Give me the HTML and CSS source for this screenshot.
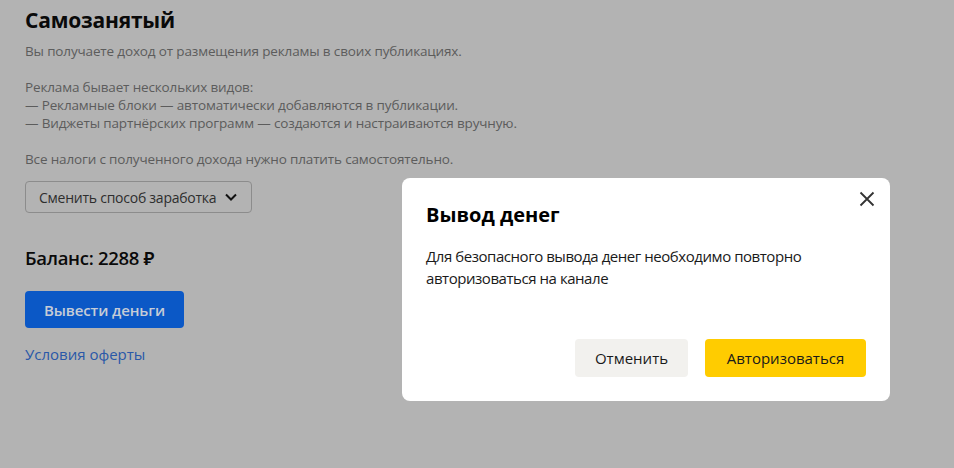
FILE: index.html
```html
<!DOCTYPE html>
<html lang="ru">
<head>
<meta charset="utf-8">
<link rel="stylesheet" href="styles.css">
</head>
<body>
<main class="page">
  <h1 class="title">Самозанятый</h1>
  <p class="desc">Вы получаете доход от размещения рекламы в своих публикациях.<br><br>Реклама бывает нескольких видов:<br>— Рекламные блоки — автоматически добавляются в публикации.<br>— Виджеты партнёрских программ — создаются и настраиваются вручную.<br><br>Все налоги с полученного дохода нужно платить самостоятельно.</p>
  <button class="select">Сменить способ заработка
    <svg class="chev" width="14" height="10" viewBox="0 0 14 10"><path d="M2 2.5l5 5 5-5" fill="none" stroke="#111" stroke-width="2"/></svg>
  </button>
  <div class="balance">Баланс: 2288 ₽</div>
  <button class="primary">Вывести деньги</button>
  <a class="link">Условия оферты</a>
</main>
<div class="modal">
  <button class="close" aria-label="Закрыть">
    <svg width="16" height="16" viewBox="0 0 16 16"><path d="M1.5 1.5l13 13M14.5 1.5l-13 13" stroke="#333" stroke-width="1.8" fill="none"/></svg>
  </button>
  <h2 class="m-title">Вывод денег</h2>
  <p class="m-text">Для безопасного вывода денег необходимо повторно авторизоваться на канале</p>
  <div class="m-actions">
    <button class="btn-cancel">Отменить</button>
    <button class="btn-auth">Авторизоваться</button>
  </div>
</div>
</body>
</html>
```
FILE: styles.css
```css
* { box-sizing: border-box; }
html, body { margin: 0; height: 100%; }
body {
  background: #b3b3b3;
  font-family: "Open Sans", "Noto Sans", sans-serif;
  position: relative;
  overflow: hidden;
}
.page {
  padding: 7px 25px 0;
  display: flex;
  flex-direction: column;
  align-items: flex-start;
}
.title {
  margin: 0;
  font-size: 21px;
  line-height: 26px;
  font-weight: 700;
  color: #0a0a0a;
  letter-spacing: -0.2px;
}
.desc {
  margin: 9px 0 0;
  font-size: 13.5px;
  line-height: 18px;
  color: #5c5c5c;
  letter-spacing: -0.15px;
}
.select {
  margin-top: 13px;
  height: 32px;
  padding: 0 13px 0 13px;
  border: 1px solid #8c8c8c;
  border-radius: 4px;
  background: transparent;
  font-family: inherit;
  font-size: 14px;
  color: #2e2e2e;
  letter-spacing: -0.25px;
  display: flex;
  align-items: center;
  gap: 8px;
}
.balance {
  margin-top: 33px;
  font-size: 18.5px;
  line-height: 24px;
  font-weight: 600;
  color: #0a0a0a;
  letter-spacing: -0.3px;
}
.primary {
  margin-top: 21px;
  width: 159px;
  height: 37px;
  border: 0;
  border-radius: 4px;
  background: #0b58c6;
  color: #c6ccd6;
  font-family: inherit;
  font-size: 15px;
  font-weight: 600;
  letter-spacing: -0.1px;
}
.link {
  margin-top: 16px;
  font-size: 15px;
  line-height: 20px;
  color: #2a58a8;
  letter-spacing: 0;
}
.modal {
  position: absolute;
  left: 402px;
  top: 178px;
  width: 488px;
  height: 223px;
  background: #fff;
  border-radius: 8px;
  padding: 24px 24px 24px 24px;
  display: flex;
  flex-direction: column;
}
.close {
  position: absolute;
  right: 11px;
  top: 9px;
  width: 24px;
  height: 24px;
  border: 0;
  background: none;
  padding: 4px;
  display: flex;
}
.m-title {
  margin: 0;
  font-size: 20px;
  line-height: 26px;
  font-weight: 700;
  color: #000;
  letter-spacing: 0;
}
.m-text {
  margin: 17px 0 0;
  font-size: 15px;
  line-height: 22px;
  color: #1a1a1a;
  letter-spacing: -0.45px;
  max-width: 420px;
}
.m-actions {
  margin-top: auto;
  display: flex;
  justify-content: flex-end;
  gap: 17px;
}
.m-actions button {
  height: 38px;
  border: 0;
  border-radius: 4px;
  font-family: inherit;
  font-size: 15px;
  color: #1a1a1a;
  letter-spacing: 0;
}
.btn-cancel {
  width: 113px;
  background: #f2f1ee;
}
.btn-auth {
  width: 161px;
  background: #ffcc00;
}
```
